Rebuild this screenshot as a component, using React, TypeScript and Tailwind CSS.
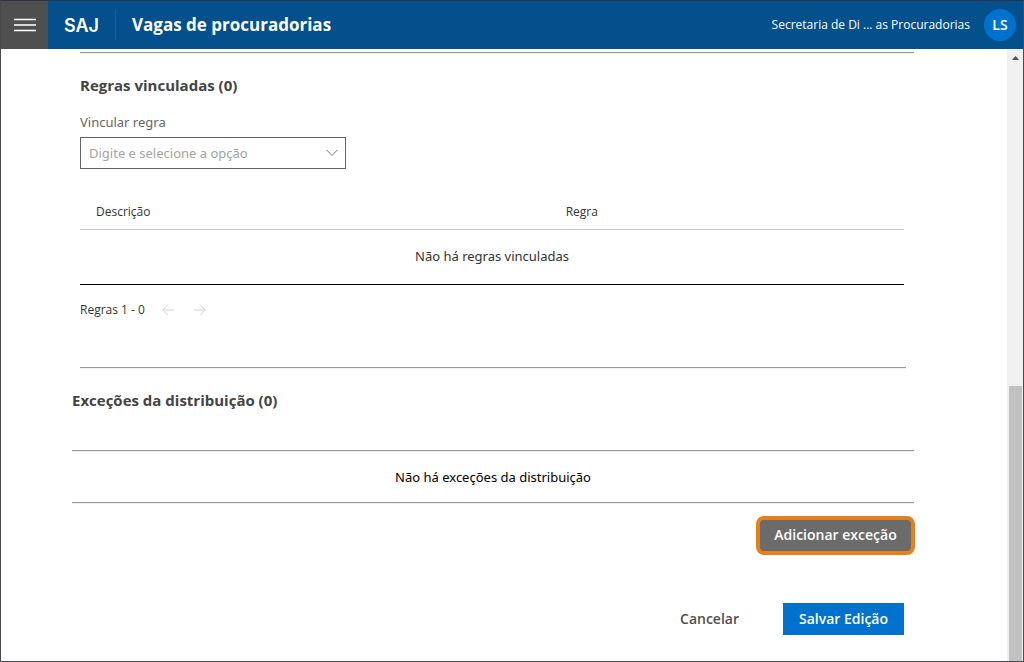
import React, { useState } from "react";
import clsx from "clsx";

interface Rule {
  description: string;
  rule: string;
}

const rules: Rule[] = [];

function Divider({ className }: { className?: string }) {
  return (
    <hr
      className={clsx(
        "h-[2px] border-t border-b border-t-[#999999] border-b-[#eeeeee]",
        className
      )}
    />
  );
}

function Header() {
  return (
    <header className="flex h-12 shrink-0 items-center bg-[#03508c] text-white">
      <button
        type="button"
        aria-label="Menu"
        className="flex h-12 w-[47px] items-center justify-center bg-[#4f4f4f]"
      >
        <svg width="22" height="14" viewBox="0 0 22 14" fill="none">
          <path d="M0 1.5h22M0 12.5h22" stroke="#fff" strokeWidth="1.4" />
          <path d="M0 7h22" stroke="#d8d8d8" strokeWidth="2" />
        </svg>
      </button>
      <span className="w-[67px] pt-px pl-4 font-['Inter',sans-serif] text-lg font-semibold">
        SAJ
      </span>
      <div className="h-[30px] w-px bg-[#0563ae]" />
      <h1 className="ml-4 text-[17px] font-bold">Vagas de procuradorias</h1>
      <span className="ml-auto text-xs">Secretaria de Di ... as Procuradorias</span>
      <button
        type="button"
        className="mr-[7px] ml-[14px] size-8 rounded-full bg-[#0072ce] text-sm font-semibold"
      >
        LS
      </button>
    </header>
  );
}

function RulePicker() {
  const [value, setValue] = useState("");

  return (
    <div className="mt-[15px] flex flex-col font-['Noto_Sans',sans-serif] text-[13px]">
      <label htmlFor="rule" className="leading-5 text-[#666666]">
        Vincular regra
      </label>
      <div className="relative mt-[5px] w-[266px]">
        <input
          id="rule"
          type="text"
          value={value}
          onChange={(e) => setValue(e.target.value)}
          placeholder="Digite e selecione a opção"
          className="h-8 w-full border border-[#666666] bg-white pr-8 pl-2 text-[#333333] placeholder:text-[#a3a3a3]"
        />
        <svg
          className="pointer-events-none absolute top-3 right-2"
          width="12"
          height="8"
          viewBox="0 0 12 8"
          fill="none"
        >
          <path d="M0.5 0.8L6 6.5L11.5 0.8" stroke="#777" strokeWidth="1" />
        </svg>
      </div>
    </div>
  );
}

function RulesTable() {
  return (
    <table className="mt-[23px] w-full table-fixed text-[#333333]">
      <thead>
        <tr className="h-[37px] border-b border-[#c4c4c4] text-left text-xs">
          <th className="w-[57%] pt-1 pl-4 font-medium">Descrição</th>
          <th className="pt-1 pl-4 font-medium">Regra</th>
        </tr>
      </thead>
      <tbody className="font-['Noto_Sans',sans-serif] text-[13px]">
        {rules.length === 0 && (
          <tr className="h-[55px] border-b border-black">
            <td colSpan={2} className="text-center">
              Não há regras vinculadas
            </td>
          </tr>
        )}
        {rules.map((item) => (
          <tr key={item.description} className="h-[55px] border-b border-black">
            <td className="pl-4">{item.description}</td>
            <td className="pl-4">{item.rule}</td>
          </tr>
        ))}
      </tbody>
    </table>
  );
}

function Pagination() {
  return (
    <div className="mt-[15px] flex h-5 items-center text-xs text-[#333333]">
      <span>Regras 1 - {rules.length}</span>
      <div className="ml-[17px] flex gap-5">
        <button type="button" aria-label="Anterior" disabled>
          <svg width="12" height="12" viewBox="0 0 12 12" fill="none" stroke="#d2d2d2">
            <path d="M12 6H0.7M6 0.7L0.7 6L6 11.3" />
          </svg>
        </button>
        <button type="button" aria-label="Próxima" disabled>
          <svg width="12" height="12" viewBox="0 0 12 12" fill="none" stroke="#d2d2d2">
            <path d="M0 6H11.3M6 0.7L11.3 6L6 11.3" />
          </svg>
        </button>
      </div>
    </div>
  );
}

function ScrollTrack() {
  return (
    <div className="flex w-4 shrink-0 flex-col items-center justify-between bg-[#f0f0f0]">
      <svg className="mt-[7px]" width="7" height="4" viewBox="0 0 7 4">
        <path d="M0 4L3.5 0L7 4Z" fill="#505050" />
      </svg>
      <div className="h-[45%] w-[13px] bg-[#c1c1c1]" />
    </div>
  );
}

export default function App() {
  return (
    <div className="flex min-h-screen flex-col border border-[#4a4a4e] border-t-[#2b3442] bg-white font-['Open_Sans','Noto_Sans',sans-serif]">
      <Header />
      <div className="flex grow">
        <main className="grow pt-[3px] pr-[93px] pb-6 pl-[71px]">
          <section className="pl-2">
            <Divider />
            <div className="mt-[19px] mr-[10px]">
              <h2 className="text-[15px] leading-6 font-bold text-[#444444]">
                Regras vinculadas ({rules.length})
              </h2>
              <RulePicker />
              <RulesTable />
              <Pagination />
            </div>
            <Divider className="mt-[47px] mr-2" />
          </section>

          <section className="mt-[19px]">
            <h2 className="text-[15px] leading-6 font-bold text-[#444444]">
              Exceções da distribuição (0)
            </h2>
            <Divider className="mt-[38px]" />
            <p className="py-[15px] text-center font-['Noto_Sans',sans-serif] text-[13px] leading-5 text-black">
              Não há exceções da distribuição
            </p>
            <Divider />
            <div className="mt-3 flex justify-end">
              <button
                type="button"
                className="-mr-px h-[39px] w-[159px] rounded-lg border-4 border-[#e5801c] bg-[#6b6b6b] text-sm font-semibold text-white"
              >
                Adicionar exceção
              </button>
            </div>
          </section>

          <div className="mt-12 mr-[10px] flex justify-end gap-7">
            <button type="button" className="h-8 px-4 text-sm font-semibold text-[#505050]">
              Cancelar
            </button>
            <button
              type="button"
              className="h-8 w-[121px] bg-[#0072ce] text-sm font-semibold text-white"
            >
              Salvar Edição
            </button>
          </div>
        </main>
        <ScrollTrack />
      </div>
    </div>
  );
}
